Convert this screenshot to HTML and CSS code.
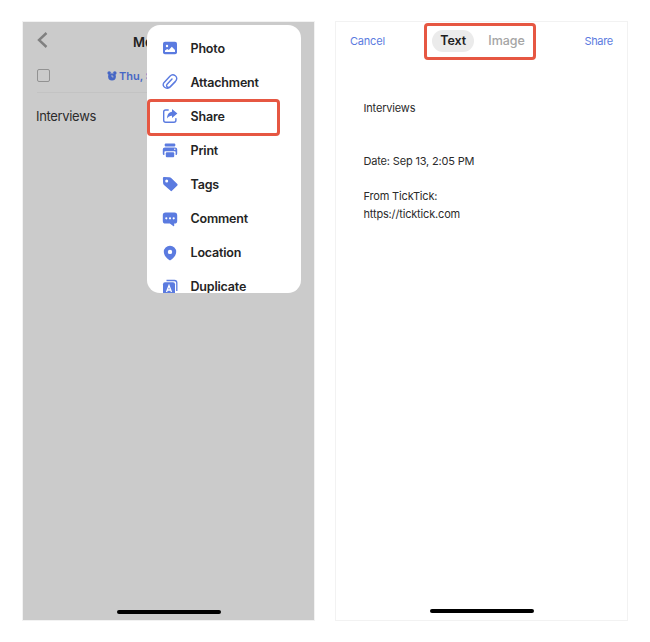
FILE: index.html
```html
<!DOCTYPE html>
<html lang="en">
<head>
<meta charset="utf-8">
<title>Share a task</title>
<link rel="stylesheet" href="styles.css">
</head>
<body>
<main class="screens">
  <section class="phone phone-task">
    <header class="task-header">
      <svg class="back" viewBox="0 0 12 18"><path d="M9.500 2 2 9l7.500 7"/></svg>
      <span class="task-title">Memo</span>
    </header>
    <div class="task-meta">
      <span class="checkbox"></span>
      <svg class="alarm" viewBox="0 0 10 10"><circle cx="2.200" cy="2.100" r="1.800"/><circle cx="7.800" cy="2.100" r="1.800"/><circle cx="5" cy="5.600" r="3.900"/><path class="hands" d="M5 3.900v2h1.500M3.600 2.300Q5 1.500 6.400 2.300"/></svg>
      <span class="date">Thu, Sep 13</span>
    </div>
    <p class="task-body">Interviews</p>
    <div class="home-bar"></div>

    <nav class="menu">
      <div class="item"><svg class="icon" viewBox="0 0 16 16"><rect x="1" y="1.800" width="14" height="12.500" rx="2"/><circle class="cut" cx="5" cy="6" r="1.200"/><path class="cut" d="M3 12V10.500L5.200 9l1.600 1 3-3.200L13 10v2z"/></svg>Photo</div>
      <div class="item"><svg class="icon stroke" viewBox="0 0 16 16"><path d="M13.300 7.700 8.200 13.100C5.400 16-.9 12.700 1.900 8.700L7.900 2.200c3.300-3.300 9.200.6 5.800 4.800L8.300 12.500c-2.200 2.100-5-.2-3.200-2.300l4.900-5.300"/></svg>Attachment</div>
      <div class="item"><svg class="icon stroke" viewBox="0 0 16 16"><path d="M6.200 2H3.600C2.300 2 1.700 2.700 1.700 4v8.300c0 1.300.7 2 2 2h8.200c1.300 0 2-.7 2-2v-1.700"/><path class="solid" d="M10 1.100 15.400 5.600 10 10.100V7.700C7.800 7.600 6.400 8.500 5 10.500 5.200 6.700 6.800 4 10 3.700z"/></svg>Share</div>
      <div class="item"><svg class="icon" viewBox="0 0 16 16"><rect x="2.700" y="1.600" width="10.600" height="2.800" rx="1"/><path d="M3 5.400h10c1.500 0 2.200.7 2.200 2v4c0 1-.5 1.500-1.600 1.500v-2.700c0-.7-.3-1-1-1H3.400c-.7 0-1 .3-1 1v2.700c-1.100 0-1.600-.5-1.600-1.500v-4c0-1.300.7-2 2.200-2z"/><circle class="cut" cx="12.800" cy="7.200" r=".7"/><rect x="3.800" y="10.300" width="8.400" height="5" rx="1"/></svg>Print</div>
      <div class="item"><svg class="icon" viewBox="0 0 16 16"><path d="M2.300 1 7.500 1.200c.7 0 1.200.3 1.700.8l5.900 5.800c.7.700.7 1.200 0 1.900l-4.900 4.900c-.7.700-1.200.7-1.900 0L2 8.900c-.5-.5-.8-1-.9-1.700L.9 2.300C.9 1.400 1.400 1 2.300 1z"/><circle class="cut" cx="4.700" cy="4.900" r="1.500"/></svg>Tags</div>
      <div class="item"><svg class="icon" viewBox="0 0 16 16"><path d="M3.500 1.500h9c1.800 0 2.700.9 2.700 2.700v5.700c0 1.800-.9 2.700-2.700 2.700h-.3v2.200c0 .5-.3.600-.7.400L7.800 12.600H3.500c-1.800 0-2.700-.9-2.700-2.700V4.200c0-1.800.9-2.700 2.700-2.700z"/><circle class="cut" cx="4.300" cy="7.300" r="1.100"/><circle class="cut" cx="8" cy="7.300" r="1.100"/><circle class="cut" cx="11.700" cy="7.300" r="1.100"/></svg>Comment</div>
      <div class="item"><svg class="icon" viewBox="0 0 16 16"><path d="M8 .8a6.200 6.200 0 0 1 6.200 6.200c0 3-2.400 5.800-5.400 8-.6.400-1 .4-1.600 0-3-2.200-5.400-5-5.400-8A6.200 6.200 0 0 1 8 .8z"/><circle class="cut" cx="8" cy="6.900" r="2.200"/></svg>Location</div>
      <div class="item"><svg class="icon" viewBox="0 0 16 16"><path class="line" d="M4.500 1.500h8c1.600 0 2.300.7 2.300 2.300V12"/><rect x="1" y="3.300" width="12" height="12.500" rx="2"/><path class="letter" d="M4.500 13 7 6.600 9.500 13M5.300 11h3.400"/></svg>Duplicate</div>
    </nav>
    <div class="highlight"></div>
  </section>

  <section class="phone phone-share">
    <header class="share-header">
      <span class="action">Cancel</span>
      <div class="tabs">
        <span class="tab active">Text</span>
        <span class="tab">Image</span>
      </div>
      <span class="action">Share</span>
    </header>
    <div class="preview">
      <p class="name">Interviews</p>
      <p class="when">Date: Sep 13, 2:05 PM</p>
      <p>From TickTick:<br>https://ticktick.com</p>
    </div>
    <div class="home-bar"></div>
  </section>
</main>
</body>
</html>
```
FILE: styles.css
```css
* { box-sizing: border-box; }

body {
  margin: 0;
  background: #fff;
  color: #2b2b2b;
  font-family: Inter, "Liberation Sans", sans-serif;
}

p { margin: 0; }
svg { display: block; flex: none; }

.screens {
  display: flex;
  gap: 20px;
  padding: 21px 0 0 22px;
}

.phone {
  position: relative;
  display: flex;
  flex-direction: column;
  width: 293px;
  height: 600px;
  border: 1px solid #f2f2f2;
}

.phone-task { background: #cbcbcb; }

.task-header {
  display: flex;
  align-items: center;
  height: 36px;
  padding-left: 14px;
}

.back {
  width: 12px;
  height: 18px;
  fill: none;
  stroke: #808080;
  stroke-width: 2.4;
}

.task-title {
  margin: 3px 0 0 84px;
  font-size: 13px;
  font-weight: 600;
  color: #202020;
}

.task-meta {
  display: flex;
  align-items: center;
  height: 35px;
  margin: 0 14px;
  padding-top: 1px;
  border-bottom: 1px solid #c3c3c3;
}

.checkbox {
  width: 13px;
  height: 13px;
  border: 1px solid #929292;
  border-radius: 2px;
}

.alarm {
  width: 10px;
  height: 10px;
  margin: 0 2px 0 57px;
  fill: #4767c5;
}

.hands {
  fill: none;
  stroke: #cbcbcb;
  stroke-width: .8;
}

.date {
  font-size: 11px;
  font-weight: 600;
  color: #4767c5;
}

.task-body {
  margin: 13px 0 0 13px;
  font-size: 13px;
  letter-spacing: -.33px;
  line-height: 20px;
}

.home-bar {
  width: 104px;
  height: 4px;
  margin: auto auto 6px;
  border-radius: 2px;
  background: #000;
}

.menu {
  position: absolute;
  top: 3px;
  left: 124px;
  width: 154px;
  height: 268px;
  padding-top: 6px;
  overflow: hidden;
  border-radius: 13px;
  background: #fff;
}

.item {
  display: flex;
  align-items: center;
  gap: 12.5px;
  height: 34.1px;
  padding-left: 15px;
  font-size: 12.5px;
  font-weight: 600;
  letter-spacing: -.18px;
  color: #242424;
}

.icon {
  width: 16px;
  height: 16px;
  fill: #5b7be0;
}

.icon .cut { fill: #fff; }

.stroke {
  fill: none;
  stroke: #5b7be0;
  stroke-width: 1.4;
  stroke-linecap: round;
  stroke-linejoin: round;
}

.solid { fill: #5b7be0; stroke: none; }
.line { fill: none; stroke: #5b7be0; stroke-width: 1.3; }
.letter { fill: none; stroke: #fff; stroke-width: 1.3; }

.highlight {
  position: absolute;
  top: 77px;
  left: 124px;
  width: 133px;
  height: 37px;
  border: 3px solid #e65742;
  border-radius: 4px;
}

.share-header {
  display: flex;
  align-items: center;
  justify-content: space-between;
  height: 38px;
  padding: 0 14px;
}

.action {
  font-size: 11px;
  letter-spacing: -.3px;
  color: #5b7be0;
}

.action:first-child { letter-spacing: -.2px; }

.tabs {
  display: flex;
  align-items: center;
  gap: 6px;
  width: 112px;
  height: 37px;
  margin: 1px 0 0 -9px;
  padding: 0 0 2px 5px;
  border: 3px solid #e65742;
  border-radius: 4px;
}

.tab {
  padding: 0 8px;
  border-radius: 11px;
  font-size: 12.5px;
  font-weight: 500;
  line-height: 22px;
  color: #a5a5a5;
}

.tab.active {
  background: #ebebeb;
  font-weight: 600;
  color: #202020;
}

.preview {
  padding: 40px 27px 0 27.5px;
  font-size: 11px;
  letter-spacing: -.17px;
  line-height: 17.7px;
}

.name { margin-bottom: 35px; }
.when { margin-bottom: 18px; }
.phone-share .home-bar { margin-bottom: 7px; }
```
